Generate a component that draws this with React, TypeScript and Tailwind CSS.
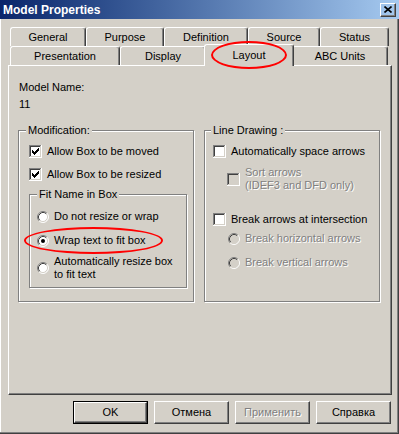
import React from "react";

const raised =
  "border border-t-white border-l-white border-r-[#404040] border-b-[#404040] shadow-[inset_-1px_-1px_0_#808080]";
const etched =
  "border border-[#808080] shadow-[1px_1px_0_#ffffff,inset_1px_1px_0_#ffffff]";
const disabledText = "text-[#808080] [text-shadow:1px_1px_0_#ffffff]";

function CheckBox({ checked = false, disabled = false }: { checked?: boolean; disabled?: boolean }) {
  const tops = [2, 3, 4, 3, 2, 1, 0];
  return (
    <svg width="13" height="13" viewBox="0 0 13 13" shapeRendering="crispEdges" className="shrink-0">
      <rect x="0" y="0" width="12" height="1" fill="#808080" />
      <rect x="0" y="0" width="1" height="12" fill="#808080" />
      <rect x="0" y="12" width="13" height="1" fill="#ffffff" />
      <rect x="12" y="0" width="1" height="13" fill="#ffffff" />
      <rect x="1" y="1" width="10" height="1" fill="#404040" />
      <rect x="1" y="1" width="1" height="10" fill="#404040" />
      <rect x="1" y="11" width="11" height="1" fill="#d4d0c8" />
      <rect x="11" y="1" width="1" height="11" fill="#d4d0c8" />
      <rect x="2" y="2" width="9" height="9" fill={disabled ? "#d4d0c8" : "#ffffff"} />
      {checked &&
        tops.map((t, i) => (
          <rect key={i} x={3 + i} y={3 + t} width="1" height="3" fill={disabled ? "#808080" : "#000000"} />
        ))}
    </svg>
  );
}

function Radio({ checked = false, disabled = false }: { checked?: boolean; disabled?: boolean }) {
  return (
    <svg width="12" height="12" viewBox="0 0 12 12" className="shrink-0">
      <circle cx="6" cy="6" r="5" fill={disabled ? "#d4d0c8" : "#ffffff"} />
      <path d="M2.11 9.89 A5.5 5.5 0 0 1 9.89 2.11" fill="none" stroke="#808080" strokeWidth="1" />
      <path d="M9.89 2.11 A5.5 5.5 0 0 1 2.11 9.89" fill="none" stroke="#ffffff" strokeWidth="1" />
      <path d="M2.82 9.18 A4.5 4.5 0 0 1 9.18 2.82" fill="none" stroke="#404040" strokeWidth="1" />
      <path d="M9.18 2.82 A4.5 4.5 0 0 1 2.82 9.18" fill="none" stroke="#d4d0c8" strokeWidth="1" />
      {checked && <circle cx="6" cy="6" r="2" fill={disabled ? "#808080" : "#000000"} />}
    </svg>
  );
}

function Tab({ label, className }: { label: string; className: string }) {
  return (
    <div
      className={`h-[19px] flex items-center justify-center border-t border-l border-r border-t-white border-l-white border-r-[#404040] rounded-t-[3px] shadow-[inset_-1px_0_0_#808080] ${className}`}
    >
      {label}
    </div>
  );
}

function Button({ label, isDefault = false, disabled = false }: { label: string; isDefault?: boolean; disabled?: boolean }) {
  if (isDefault) {
    return (
      <div className="w-[75px] h-[23px] border border-black">
        <div className={`w-full h-full flex items-center justify-center ${raised}`}>{label}</div>
      </div>
    );
  }
  return (
    <div className={`w-[75px] h-[23px] flex items-center justify-center ${raised} ${disabled ? disabledText : ""}`}>
      {label}
    </div>
  );
}

export default function App() {
  return (
    <div className="w-[399px] h-[434px] bg-[#d4d0c8] relative overflow-hidden flex flex-col text-[11px] leading-[13px] text-black font-['Liberation_Sans',Arial,sans-serif] shadow-[inset_-1px_-1px_0_#404040,inset_-2px_-2px_0_#808080,inset_1px_0_0_#ffffff]">
      {/* Title bar */}
      <div className="h-[19px] shrink-0 flex items-center justify-between pl-[3px] pr-[3px] bg-linear-to-r from-[#0a246a] to-[#a6caf0]">
        <span className="text-white font-bold text-[12px] leading-[14px]">Model Properties</span>
        <div className={`w-[16px] h-[14px] flex items-center justify-center ${raised}`}>
          <svg width="8" height="7" viewBox="0 0 8 7">
            <path d="M0.5 0.5 L7.5 6.5 M7.5 0.5 L0.5 6.5" stroke="#000" strokeWidth="1.6" fill="none" />
          </svg>
        </div>
      </div>

      {/* Tabs */}
      <div className="mt-[8px] flex flex-col pl-[10px]">
        <div className="flex">
          <Tab label="General" className="w-[76px]" />
          <Tab label="Purpose" className="w-[78px]" />
          <Tab label="Definition" className="w-[84px]" />
          <Tab label="Source" className="w-[72px]" />
          <Tab label="Status" className="w-[69px]" />
        </div>
        <div className="flex h-[19px]">
          <Tab label="Presentation" className="w-[110px]" />
          <Tab label="Display" className="w-[86px]" />
          <div className="relative z-10 -mt-[2px] -mx-[2px] w-[90px] h-[22px] bg-[#d4d0c8] flex items-start justify-center pt-[4px] border-t border-l border-r border-t-white border-l-white border-r-[#404040] rounded-t-[3px] shadow-[inset_-1px_0_0_#808080]">
            Layout
          </div>
          <Tab label="ABC Units" className="w-[96px]" />
        </div>
      </div>

      {/* Tab page */}
      <div className={`ml-[8px] w-[384px] h-[330px] shrink-0 ${raised}`}>
        <div className="ml-[10px] mt-[15px]">Model Name:</div>
        <div className="ml-[10px] mt-[4px]">11</div>

        <div className="flex mt-[13px] ml-[9px]">
          {/* Modification */}
          <fieldset className={`w-[176px] h-[178px] ${etched}`}>
            <legend className="ml-[7px] px-[2px] bg-[#d4d0c8]">Modification:</legend>
            <div className="flex items-center gap-[5px] h-[13px] ml-[10px] mt-[8px]">
              <CheckBox checked />
              <span>Allow Box to be moved</span>
            </div>
            <div className="flex items-center gap-[5px] h-[13px] ml-[10px] mt-[10px]">
              <CheckBox checked />
              <span>Allow Box to be resized</span>
            </div>
            <fieldset className={`ml-[10px] mt-[7px] w-[158px] h-[100px] ${etched}`}>
              <legend className="ml-[7px] px-[2px] bg-[#d4d0c8]">Fit Name in Box</legend>
              <div className="flex items-center gap-[5px] h-[13px] ml-[7px] mt-[9px]">
                <Radio />
                <span>Do not resize or wrap</span>
              </div>
              <div className="flex items-center gap-[5px] h-[13px] ml-[7px] mt-[11px]">
                <Radio checked />
                <span>Wrap text to fit box</span>
              </div>
              <div className="flex items-center gap-[5px] ml-[7px] mt-[8px]">
                <Radio />
                <span>
                  Automatically resize box
                  <br />
                  to fit text
                </span>
              </div>
            </fieldset>
          </fieldset>

          {/* Line Drawing */}
          <fieldset className={`ml-[10px] w-[176px] h-[178px] ${etched}`}>
            <legend className="ml-[6px] px-[2px] bg-[#d4d0c8]">Line Drawing :</legend>
            <div className="flex items-center gap-[5px] h-[13px] ml-[8px] mt-[8px]">
              <CheckBox />
              <span>Automatically space arrows</span>
            </div>
            <div className="flex items-center gap-[5px] ml-[22px] mt-[8px]">
              <CheckBox disabled />
              <span className={disabledText}>
                Sort arrows
                <br />
                (IDEF3 and DFD only)
              </span>
            </div>
            <div className="flex items-center gap-[5px] h-[13px] ml-[8px] mt-[21px]">
              <CheckBox />
              <span>Break arrows at intersection</span>
            </div>
            <div className="flex items-center gap-[5px] h-[13px] ml-[23px] mt-[6px]">
              <Radio disabled />
              <span className={disabledText}>Break horizontal arrows</span>
            </div>
            <div className="flex items-center gap-[5px] h-[13px] ml-[23px] mt-[11px]">
              <Radio disabled />
              <span className={disabledText}>Break vertical arrows</span>
            </div>
          </fieldset>
        </div>
      </div>

      {/* Buttons */}
      <div className="mt-[6px] flex justify-end gap-[6px] pr-[8px]">
        <Button label="OK" isDefault />
        <Button label="Отмена" />
        <Button label="Применить" disabled />
        <Button label="Справка" />
      </div>

      {/* Red annotation ellipses */}
      <div className="absolute z-20 left-[211px] top-[41px] w-[76px] h-[28px] rounded-[50%] border-2 border-[#ff0000] pointer-events-none" />
      <div className="absolute z-20 left-[24px] top-[227px] w-[139px] h-[27px] rounded-[50%] border-2 border-[#ff0000] pointer-events-none" />
    </div>
  );
}
